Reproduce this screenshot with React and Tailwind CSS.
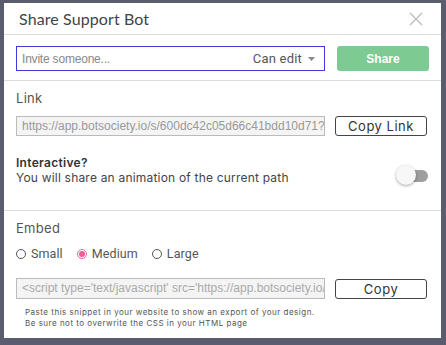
import React from 'react';

function Radio({ label, checked }) {
  return (
    <label className="flex items-center gap-[5px] mr-[14px]">
      <span
        className={
          'w-[10px] h-[10px] rounded-full border flex items-center justify-center ' +
          (checked ? 'border-[#e8699c]' : 'border-[#555]')
        }
      >
        {checked && <span className="w-[6px] h-[6px] rounded-full bg-[#ec5f97]" />}
      </span>
      <span className="text-[12.5px] text-[#555] font-['Roboto',sans-serif] tracking-[0.1px]">{label}</span>
    </label>
  );
}

export default function App() {
  return (
    <div className="w-[446px] h-[345px] bg-[#5b5d6e] pt-[3px] pl-[4px] font-['Inter',sans-serif]">
      <div className="w-[437px] h-[335px] bg-white flex flex-col">
        {/* Header */}
        <div className="h-[32px] flex items-center justify-between pl-[15px] pr-[18px] border-b border-[#dcdcdc]">
          <h1 className="text-[16px] text-[#444] tracking-[0.1px] font-['Lato',sans-serif]">Share Support Bot</h1>
          <svg width="14" height="14" viewBox="0 0 14 14" className="text-[#bdbdbd]">
            <path d="M1 1 L13 13 M13 1 L1 13" stroke="currentColor" strokeWidth="1.4" />
          </svg>
        </div>

        {/* Invite */}
        <div className="flex items-center gap-[12px] px-[12px] pt-[11px] pb-[9px] border-b border-[#dcdcdc]">
          <div className="w-[309px] h-[25px] border border-[#3c3cdc] flex items-center pl-[5px] pr-[9px]">
            <span className="flex-1 text-[12px] tracking-[-0.2px] text-[#888] font-['Liberation_Sans',sans-serif]">Invite someone...</span>
            <span className="text-[13px] text-[#555] font-['Roboto',sans-serif] tracking-[0.2px]">Can edit</span>
            <svg width="7" height="4" viewBox="0 0 7 4" className="ml-[6px]">
              <path d="M0 0 L7 0 L3.5 4 Z" fill="#888" />
            </svg>
          </div>
          <button className="w-[92px] h-[25px] rounded-[3px] bg-[#7dca92] text-white text-[12px] font-bold font-['Liberation_Sans',sans-serif]">
            Share
          </button>
        </div>

        {/* Link */}
        <div className="px-[12px] pt-[9px] border-b border-[#dcdcdc] h-[130px]">
          <div className="text-[13px] text-[#555] tracking-[0.3px] leading-[16px]">Link</div>
          <div className="flex items-center gap-[10px] mt-[10px]">
            <div className="w-[309px] h-[20px] border border-[#bbb] bg-[#f4f4f4] pl-[5px] overflow-hidden whitespace-nowrap text-[12px] leading-[18px] text-[#999] font-['Liberation_Sans',sans-serif]">
              https://app.botsociety.io/s/600dc42c05d66c41bdd10d71?p=1
            </div>
            <button className="w-[92px] h-[20px] border border-[#444] rounded-[3px] text-[13px] text-[#333] tracking-[0.5px] leading-[16px]">
              Copy Link
            </button>
          </div>
          <div className="flex items-start justify-between mt-[19px]">
            <div>
              <div className="text-[12px] font-semibold text-[#333] tracking-[0.3px] leading-[16px]">Interactive?</div>
              <div className="text-[12px] text-[#444] tracking-[0.2px] leading-[16px] mt-[-1px]">
                You will share an animation of the current path
              </div>
            </div>
            <div className="relative w-[32px] h-[22px] mt-[10px] mr-[1px]">
              <div className="absolute left-[8px] top-[5px] w-[24px] h-[12px] rounded-full bg-[#9e9e9e]" />
              <div className="absolute left-0 top-0 w-[20px] h-[20px] rounded-full bg-[#f7f7f7] shadow-[0_1px_3px_rgba(0,0,0,0.35)]" />
            </div>
          </div>
        </div>

        {/* Embed */}
        <div className="px-[12px] pt-[9px]">
          <div className="text-[13px] text-[#555] tracking-[0.3px] leading-[16px]">Embed</div>
          <div className="flex items-center mt-[10px] h-[16px]">
            <Radio label="Small" />
            <Radio label="Medium" checked />
            <Radio label="Large" />
          </div>
          <div className="flex items-center gap-[10px] mt-[16px]">
            <div className="w-[309px] h-[21px] border border-[#bbb] bg-[#f4f4f4] pl-[5px] overflow-hidden whitespace-nowrap text-[12px] leading-[19px] text-[#aaa] font-['Liberation_Sans',sans-serif]">
              &lt;script type='text/javascript' src='https://app.botsociety.io/embed.js'&gt;
            </div>
            <button className="w-[92px] h-[20px] border border-[#444] rounded-[3px] text-[13px] text-[#333] tracking-[0.6px] leading-[16px]">
              Copy
            </button>
          </div>
          <div className="pl-[9px] mt-[8px] text-[8px] leading-[11px] tracking-[0.5px] text-[#555]">
            <div>Paste this snippet in your website to show an export of your design.</div>
            <div>Be sure not to overwrite the CSS in your HTML page</div>
          </div>
        </div>
      </div>
    </div>
  );
}
